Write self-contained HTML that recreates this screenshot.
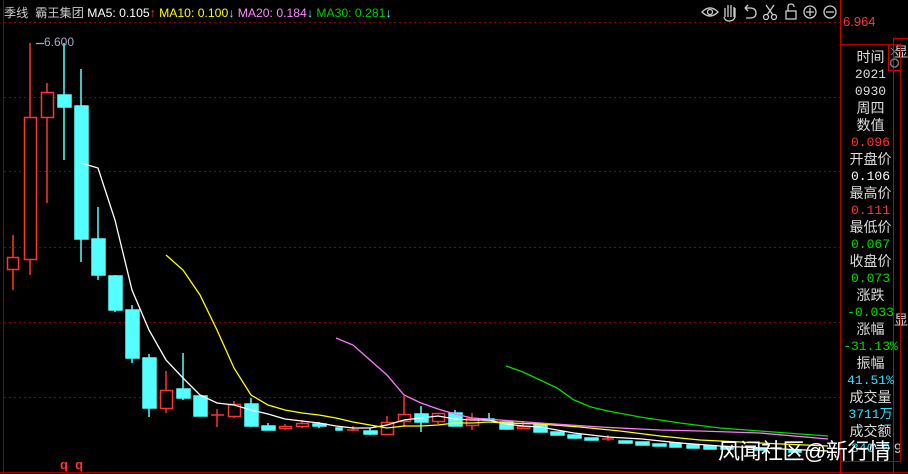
<!DOCTYPE html>
<html><head><meta charset="utf-8"><style>
body{margin:0;background:#000;width:908px;height:474px;overflow:hidden;position:relative;font-family:"Liberation Sans","Noto Sans CJK SC",sans-serif}
.t{position:absolute;white-space:nowrap}
#info{position:absolute;left:840px;top:44px;width:61px;height:418px;border:1px solid #b00000;box-sizing:border-box;}
#info div{height:17px;line-height:17px;font-size:14px;text-align:center;color:#ddd}
#info div.n{font-family:"Liberation Mono",monospace;font-size:13px}
</style></head><body>
<svg width="908" height="474" style="position:absolute;left:0;top:0">
<g stroke="#800" stroke-dasharray="2,3" stroke-width="1">
<line x1="4" y1="22.5" x2="840" y2="22.5"/><line x1="4" y1="97.5" x2="840" y2="97.5"/><line x1="4" y1="171.5" x2="840" y2="171.5"/><line x1="4" y1="247.5" x2="840" y2="247.5"/><line x1="4" y1="322.5" x2="840" y2="322.5"/><line x1="4" y1="397.5" x2="840" y2="397.5"/>
</g>
<line x1="3.5" y1="0" x2="3.5" y2="474" stroke="#800"/>
<line x1="0" y1="472.5" x2="840" y2="472.5" stroke="#900"/>
<line x1="840.5" y1="0" x2="840.5" y2="474" stroke="#c00"/>
<line x1="893.5" y1="38" x2="893.5" y2="474" stroke="#c00"/>
<line x1="893" y1="38.5" x2="908" y2="38.5" stroke="#c00"/>
<line x1="840" y1="472.5" x2="908" y2="472.5" stroke="#900"/>
<g stroke="#ff3333" fill="none" stroke-width="1.5">
<line x1="13" y1="235" x2="13" y2="290"/><rect x="7.5" y="257.5" width="11" height="12" fill="#000"/>
<line x1="30" y1="43" x2="30" y2="275"/><rect x="24.5" y="117.5" width="12" height="142" fill="#000"/>
<line x1="47" y1="83" x2="47" y2="203"/><rect x="41.5" y="92.5" width="12" height="25" fill="#000"/>
<line x1="166" y1="371" x2="166" y2="413"/><rect x="160.5" y="390.5" width="12" height="18" fill="#000"/>
<line x1="217" y1="409" x2="217" y2="427"/><line x1="211" y1="415" x2="224" y2="415"/>
<line x1="234" y1="401" x2="234" y2="418"/><rect x="228.5" y="404.5" width="12" height="12" fill="#000"/>
<line x1="285" y1="424" x2="285" y2="430"/><rect x="279.5" y="426.5" width="12" height="2" fill="#000"/>
<line x1="302" y1="420" x2="302" y2="428"/><rect x="296.5" y="423.5" width="12" height="3" fill="#000"/>
<line x1="353" y1="426" x2="353" y2="431"/><line x1="347" y1="430" x2="359" y2="430"/>
<line x1="387" y1="416" x2="387" y2="435"/><rect x="381.5" y="422.5" width="12" height="12" fill="#000"/>
<line x1="404" y1="396" x2="404" y2="427"/><rect x="398.5" y="414.5" width="12" height="7" fill="#000"/>
<line x1="438" y1="413" x2="438" y2="424"/><rect x="432.5" y="413.5" width="12" height="8" fill="#000"/>
<line x1="472" y1="413" x2="472" y2="430"/><rect x="466.5" y="418.5" width="12" height="7" fill="#000"/>
<line x1="523" y1="421" x2="523" y2="429"/><rect x="517.5" y="426.5" width="12" height="2" fill="#000"/>
<line x1="608" y1="435" x2="608" y2="441"/><line x1="602" y1="439" x2="614" y2="439"/>
</g>
<g fill="#55ffff" stroke="#55ffff" stroke-width="1.5">
<line x1="64" y1="43" x2="64" y2="160"/><rect x="58" y="95" width="13" height="12"/>
<line x1="81" y1="69" x2="81" y2="262"/><rect x="75" y="106" width="13" height="133"/>
<line x1="98" y1="207" x2="98" y2="280"/><rect x="92" y="239" width="13" height="36"/>
<line x1="115" y1="275" x2="115" y2="312"/><rect x="109" y="276" width="13" height="34"/>
<line x1="132" y1="305" x2="132" y2="363"/><rect x="126" y="310" width="13" height="48"/>
<line x1="149" y1="354" x2="149" y2="417"/><rect x="143" y="358" width="13" height="50"/>
<line x1="183" y1="353" x2="183" y2="400"/><rect x="177" y="389" width="13" height="9"/>
<rect x="194" y="396" width="13" height="20"/>
<line x1="251" y1="398" x2="251" y2="427"/><rect x="245" y="404" width="13" height="22"/>
<line x1="268" y1="423" x2="268" y2="430"/><rect x="262" y="426" width="13" height="4"/>
<line x1="319" y1="422" x2="319" y2="428"/><rect x="313" y="424" width="13" height="2"/>
<rect x="336" y="428" width="6" height="2"/>
<line x1="370" y1="428" x2="370" y2="435"/><rect x="364" y="431" width="13" height="3"/>
<line x1="421" y1="406" x2="421" y2="432"/><rect x="415" y="414" width="13" height="8"/>
<line x1="455" y1="410" x2="455" y2="426"/><rect x="449" y="413" width="13" height="13"/>
<line x1="489" y1="413" x2="489" y2="420"/><rect x="483" y="419" width="11" height="1"/>
<rect x="500" y="422" width="13" height="7"/>
<rect x="534" y="424" width="13" height="8"/>
<rect x="551" y="432" width="13" height="3"/>
<rect x="568" y="435" width="13" height="3"/>
<rect x="585" y="438" width="13" height="2"/>
<rect x="619" y="441" width="13" height="2"/>
<rect x="636" y="442" width="13" height="3"/>
<rect x="653" y="444" width="13" height="2"/>
<rect x="670" y="443" width="11" height="4"/>
<rect x="687" y="445" width="12" height="3"/>
<rect x="704" y="446" width="12" height="3"/>
<rect x="721" y="447" width="12" height="2"/>
<rect x="755" y="448" width="12" height="2"/>
<rect x="789" y="450" width="12" height="2"/>
</g>
<g fill="none" stroke-width="1.3">
<polyline stroke="#fff" points="81,163 98,168 115,220 132,290 149,330 166,360 183,378 200,395 217,403 234,405 251,410 268,414 285,419 302,421 319,423 336,426 353,428 370,428 387,425 404,420 421,418 438,416 455,419 472,420 489,420 506,424 523,426 540,427 557,430 574,433 591,435 608,437 625,438 642,439 680,443 720,446 760,448 828,451"/>
<polyline stroke="#ffff00" points="166,255 183,270 200,295 217,330 234,368 251,395 268,405 285,410 302,413 319,415 336,418 353,422 370,425 387,428 404,426 421,426 438,425 455,423 472,423 489,422 506,423 540,424 580,427 620,431 660,436 700,440 760,443 828,446"/>
<polyline stroke="#ff77ff" points="336,338 353,345 370,360 387,375 404,395 421,403 438,409 455,414 472,418 500,420 540,423 600,427 660,430 700,431 760,433 828,439"/>
<polyline stroke="#00dd00" points="506,366 523,372 540,380 557,388 574,400 591,407 608,411 640,417 680,423 720,428 760,431 800,434 828,436"/>
<line x1="36" y1="43.5" x2="44" y2="43.5" stroke="#aaa"/>
</g>
<g fill="none" stroke="#ccc" stroke-width="1.3">
<path d="M702 12 Q710 4 718 12 Q710 20 702 12Z"/><circle cx="710" cy="12" r="2.5"/>
<path d="M725 17 L725 8 M728 17 L728 5 M731 17 L731 5 M734 17 L734 7 M724 17 Q725 21 729 21 Q734 21 735 17 L735 8"/>
<path d="M745 8 L750 8 Q756 8 756 13 Q756 18 750 18 L746 18 M745 8 L748 5 M745 8 L748 11"/>
<circle cx="766" cy="17" r="2.5"/><circle cx="774" cy="17" r="2.5"/><path d="M767 15 L774 5 M773 15 L766 5"/>
<rect x="786" y="11" width="10" height="8"/><path d="M788 11 L788 7 Q788 4 791 4 Q794 4 794 7"/>
<circle cx="810" cy="12" r="6"/><path d="M806 12 L814 12 M810 8 L810 16"/>
<circle cx="830" cy="12" r="6"/><path d="M826 12 L834 12"/>
</g>
<rect x="888.5" y="44.5" width="12" height="26" fill="none" stroke="#c00"/>
<path d="M891 48 L898 55 M898 48 L891 55" stroke="#777"/>
<circle cx="894.5" cy="63" r="4" fill="none" stroke="#777" stroke-width="1.5"/>
</svg>
<div class="t" style="left:4px;top:3px;font-size:12.2px;color:#ccc">季线&nbsp;&nbsp;霸王集团 <span style="color:#fff">MA5: 0.105<span style="color:#f33">↑</span></span> <span style="color:#ff0">MA10: 0.100<span style="color:#5ff">↓</span></span> <span style="color:#f8f">MA20: 0.184<span style="color:#5ff">↓</span></span> <span style="color:#0c0">MA30: 0.281<span style="color:#5ff">↓</span></span></div>
<div class="t" style="left:44px;top:35px;font-size:12px;color:#aac">6.600</div>
<div class="t" style="left:843px;top:14px;font-size:13px;color:#f33">6.964</div>
<div class="t" style="left:894px;top:42px;font-size:14px;color:#ccc">显</div>
<div class="t" style="left:894px;top:310px;font-size:14px;color:#ccc">显</div>
<div class="t" style="left:894px;top:440px;font-size:14px;color:#ccc">9</div>
<div class="t" style="left:60px;top:457px;font-size:13px;color:#f33;font-weight:bold">q&nbsp;&nbsp;q</div>
<div id="info">
<div style="margin-top:4px">时间</div><div class="n">2021</div><div class="n">0930</div><div>周四</div><div>数值</div><div class="n" style="color:#f33">0.096</div>
<div>开盘价</div><div class="n" style="color:#fff">0.106</div><div>最高价</div><div class="n" style="color:#f33">0.111</div><div>最低价</div><div class="n" style="color:#0d0">0.067</div>
<div>收盘价</div><div class="n" style="color:#0d0">0.073</div><div>涨跌</div><div class="n" style="color:#0d0">-0.033</div><div>涨幅</div><div class="n" style="color:#0d0">-31.13%</div>
<div>振幅</div><div class="n" style="color:#3df">41.51%</div><div>成交量</div><div class="n" style="color:#3df">3711万</div><div>成交额</div><div class="n" style="color:#3df">340.0</div>
</div>
<div class="t" style="left:718px;top:434px;font-size:22px;color:#fff;letter-spacing:-0.5px">风闻社区@新行情</div>
</body></html>
